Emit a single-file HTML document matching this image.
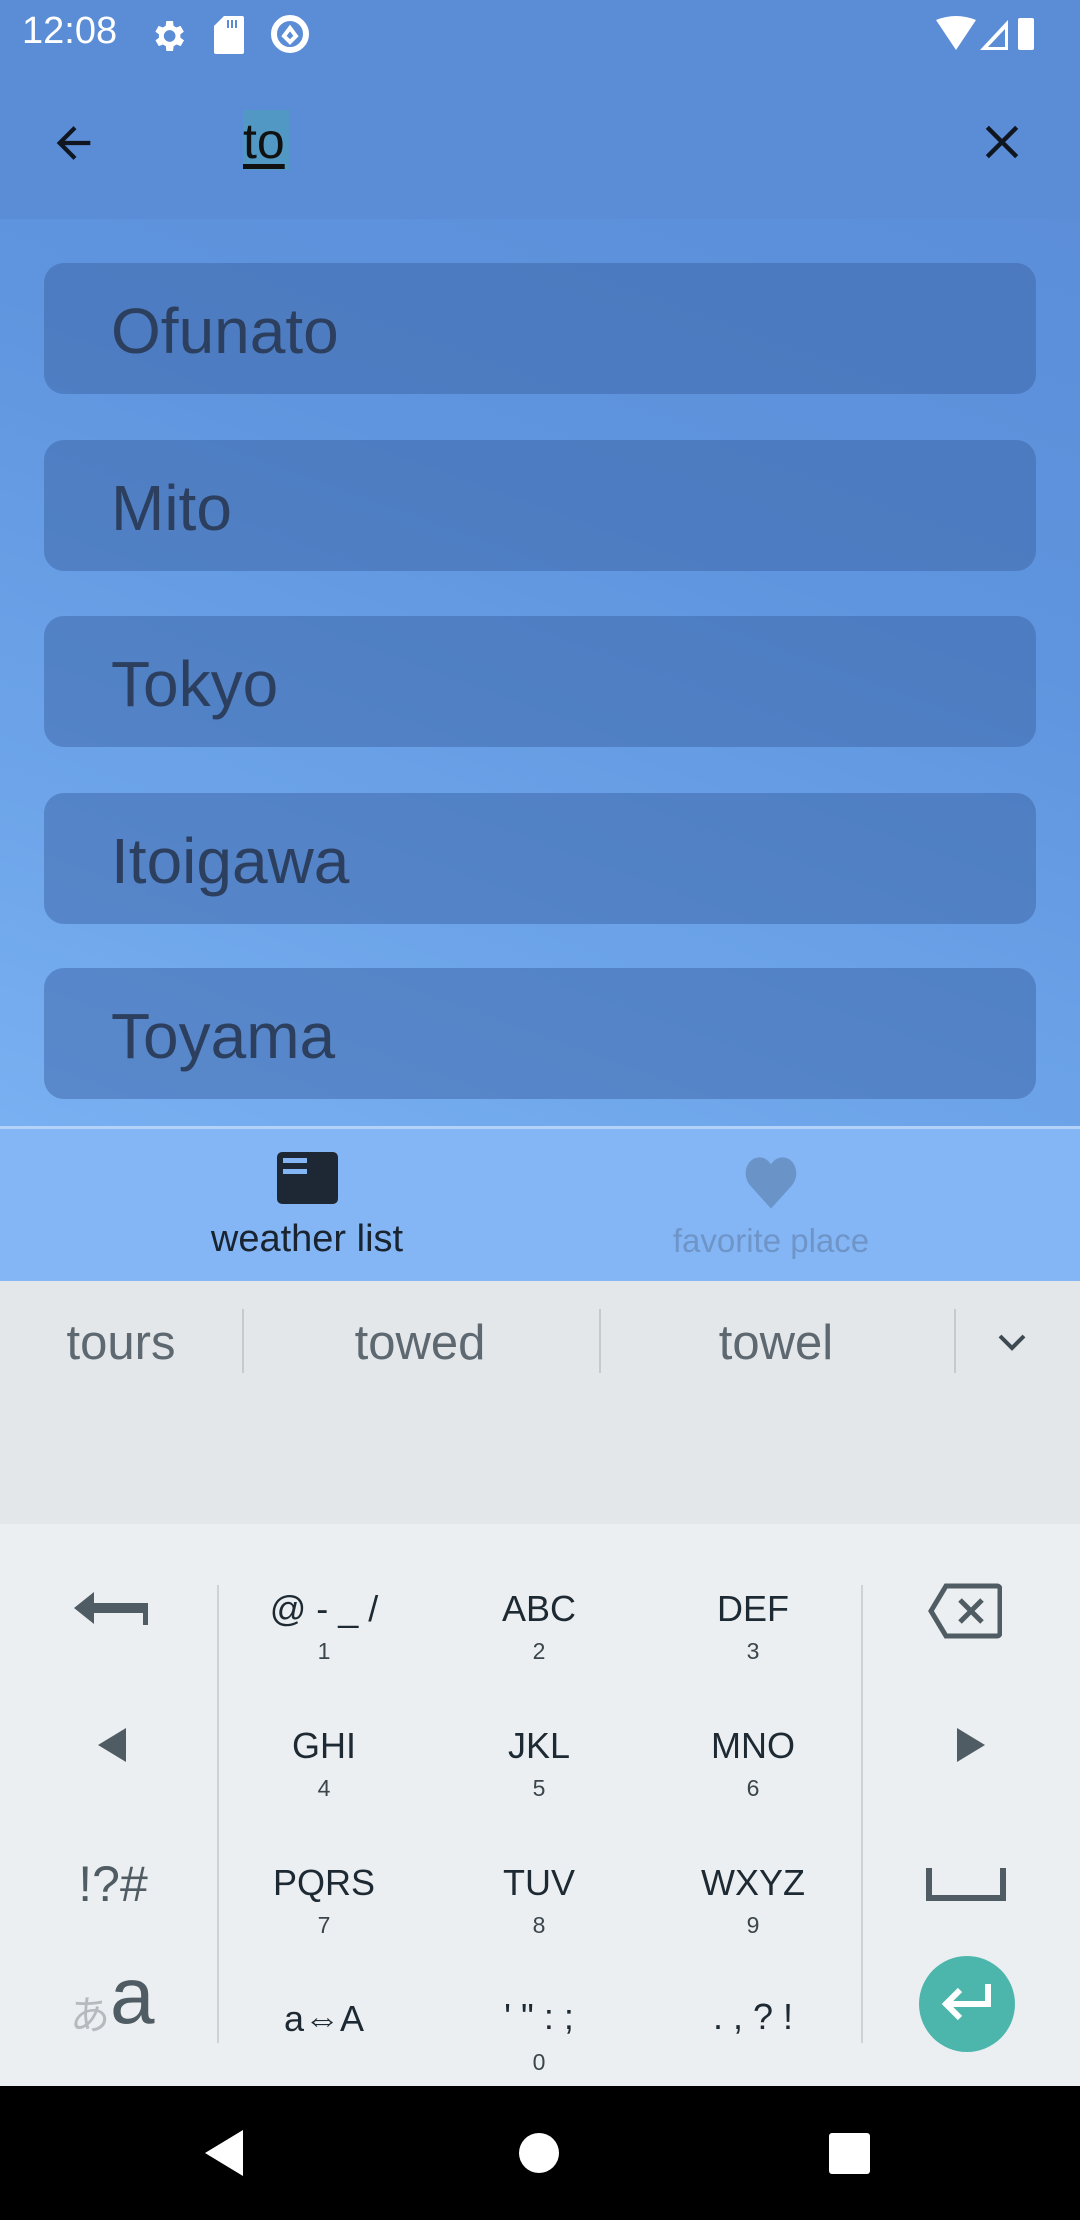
<!DOCTYPE html>
<html><head><meta charset="utf-8"><style>
*{margin:0;padding:0;box-sizing:border-box}
body{width:1080px;height:2220px;position:relative;overflow:hidden;font-family:"Liberation Sans","Noto Sans CJK JP",sans-serif;background:#eceff1}
.abs{position:absolute}
.top{left:0;top:0;width:1080px;height:1128px;background:linear-gradient(200deg,#5a8bd6 0%,#5f95de 45%,#78b0f2 100%)}
.bar{left:0;top:0;width:1080px;height:219px;background:#5b8cd6}
.card{left:44px;width:992px;height:131px;border-radius:20px;background:rgba(60,100,165,0.5);color:#2c3f5f;font-size:64px;line-height:137px;padding-left:67px}
.c{transform:translateX(-50%);text-align:center;color:#1d2a33;white-space:nowrap}
.k1{font-size:36px}
.k2{font-size:23px;color:#3a454c}
.sug{font-size:49px;color:#5d6870;top:1315px}
</style></head><body>
<div class="abs top"></div>
<div class="abs bar"></div>
<div class="abs" style="left:22px;top:10px;color:#fff;font-size:38px">12:08</div>
<svg class="abs" style="left:148px;top:16px" width="40" height="40" viewBox="0 0 24 24"><path fill="#fff" d="M19.4 13a7.5 7.5 0 000-2l2.1-1.6-2-3.5-2.5 1a7 7 0 00-1.7-1L15 3h-4l-.4 2.9a7 7 0 00-1.7 1l-2.5-1-2 3.5L6.6 11a7.5 7.5 0 000 2l-2.1 1.6 2 3.5 2.5-1a7 7 0 001.7 1L11 21h4l.4-2.9a7 7 0 001.7-1l2.5 1 2-3.5zM13 15.5a3.5 3.5 0 110-7 3.5 3.5 0 010 7z"/></svg>
<svg class="abs" style="left:214px;top:16px" width="30" height="38" viewBox="0 0 15 19"><path fill="#fff" d="M5 0h9a1 1 0 011 1v17a1 1 0 01-1 1H1a1 1 0 01-1-1V5z"/><path stroke="#5b8cd6" stroke-width="1" d="M7 2v4M9 2v4M11 2v4"/></svg>
<svg class="abs" style="left:270px;top:14px" width="40" height="40" viewBox="0 0 20 20"><circle cx="10" cy="10" r="8" fill="none" stroke="#fff" stroke-width="3"/><path d="M7 11l3-4 3 4-3 3z" fill="none" stroke="#fff" stroke-width="2"/></svg>
<svg class="abs" style="left:936px;top:16px" width="108" height="36" viewBox="0 0 108 36"><path fill="#fff" d="M0 4Q20-4 40 4L20 34z"/><path fill="#fff" d="M44 34L72 4v30z"/><path fill="#5b8cd6" d="M52 31l17-18v18z"/><rect x="82" y="2" width="16" height="32" rx="2" fill="#fff"/></svg>
<svg class="abs" style="left:52px;top:120px" width="46" height="46" viewBox="0 0 24 24"><path d="M20 12H5M12 4l-8 8 8 8" fill="none" stroke="#0f1620" stroke-width="2.2"/></svg>
<div class="abs" style="left:243px;top:110px;width:46px;height:60px;background:#5199c4"></div>
<div class="abs" style="left:243px;top:112px;font-size:50px;color:#111;text-decoration:underline;text-underline-offset:6px">to</div>
<svg class="abs" style="left:980px;top:120px" width="44" height="44" viewBox="0 0 24 24"><path d="M4 4l16 16M20 4L4 20" stroke="#0f1620" stroke-width="2.4"/></svg>
<div class="abs card" style="top:263px">Ofunato</div>
<div class="abs card" style="top:440px">Mito</div>
<div class="abs card" style="top:616px">Tokyo</div>
<div class="abs card" style="top:793px">Itoigawa</div>
<div class="abs card" style="top:968px">Toyama</div>
<div class="abs" style="left:0;top:1126px;width:1080px;height:3px;background:#b4d2f8"></div>
<div class="abs" style="left:0;top:1129px;width:1080px;height:152px;background:#84b6f6"></div>
<svg class="abs" style="left:277px;top:1152px" width="61" height="52" viewBox="0 0 61 52"><rect width="61" height="52" rx="5" fill="#1e2835"/><rect x="6" y="6" width="24" height="5" fill="#84b6f6"/><rect x="6" y="17" width="24" height="5" fill="#84b6f6"/></svg>
<svg class="abs" style="left:743px;top:1157px" width="56" height="52" viewBox="0 0 24 22"><path fill="#6a94c8" d="M12 22L3 12C-1 7 2 0 7 0c2.5 0 4 1.5 5 3 1-1.5 2.5-3 5-3 5 0 8 7 4 12z"/></svg>
<div class="abs c" style="left:307px;top:1218px;font-size:38px;color:#1a2430">weather list</div>
<div class="abs c" style="left:771px;top:1222px;font-size:33px;color:#6f95c8">favorite place</div>
<div class="abs" style="left:0;top:1281px;width:1080px;height:243px;background:#e3e7ea"></div>
<div class="abs c sug" style="left:121px">tours</div>
<div class="abs c sug" style="left:420px">towed</div>
<div class="abs c sug" style="left:776px">towel</div>
<div class="abs" style="left:242px;top:1309px;width:2px;height:64px;background:#c5cacd"></div>
<div class="abs" style="left:599px;top:1309px;width:2px;height:64px;background:#c5cacd"></div>
<div class="abs" style="left:954px;top:1309px;width:2px;height:64px;background:#c5cacd"></div>
<svg class="abs" style="left:996px;top:1330px" width="32" height="24" viewBox="0 0 32 24"><path d="M4 6l12 12 12-12" fill="none" stroke="#3e4a52" stroke-width="4"/></svg>
<div class="abs" style="left:217px;top:1585px;width:2px;height:458px;background:#cdd2d5"></div>
<div class="abs" style="left:861px;top:1585px;width:2px;height:458px;background:#cdd2d5"></div>
<svg class="abs" style="left:74px;top:1588px" width="78" height="40" viewBox="0 0 78 40"><path d="M0 20L20 4v11h54v22h-5V25H20v11z" fill="#505c63"/></svg>
<svg class="abs" style="left:98px;top:1728px" width="30" height="34" viewBox="0 0 30 34"><path d="M28 0v34L0 17z" fill="#505c63"/></svg>
<div class="abs c" style="left:113px;top:1855px;font-size:50px;color:#505c63">!?#</div>
<div class="abs" style="left:70px;top:1983px;font-size:40px;color:#b4babe">あ</div>
<div class="abs" style="left:110px;top:1950px;font-size:80px;color:#505c63">a</div>
<svg class="abs" style="left:928px;top:1583px" width="74" height="56" viewBox="0 0 74 56"><path d="M18 3h51a3 3 0 013 3v44a3 3 0 01-3 3H18L3 28z" fill="none" stroke="#505c63" stroke-width="5"/><path d="M32 17l22 22M54 17L32 39" stroke="#505c63" stroke-width="5"/></svg>
<svg class="abs" style="left:955px;top:1728px" width="30" height="34" viewBox="0 0 30 34"><path d="M2 0v34L30 17z" fill="#505c63"/></svg>
<svg class="abs" style="left:926px;top:1868px" width="80" height="34" viewBox="0 0 80 34"><path d="M3 0v30h74V0" fill="none" stroke="#505c63" stroke-width="6"/></svg>
<div class="abs" style="left:919px;top:1956px;width:96px;height:96px;border-radius:50%;background:#4db6ac"></div>
<svg class="abs" style="left:938px;top:1978px" width="60" height="52" viewBox="0 0 60 52"><path d="M50 6v20H10M22 12L8 26l14 14" fill="none" stroke="#fff" stroke-width="6"/></svg>
<div class="abs c k1" style="left:324px;top:1588px">@ - _ /</div><div class="abs c k2" style="left:324px;top:1638px">1</div>
<div class="abs c k1" style="left:539px;top:1588px">ABC</div><div class="abs c k2" style="left:539px;top:1638px">2</div>
<div class="abs c k1" style="left:753px;top:1588px">DEF</div><div class="abs c k2" style="left:753px;top:1638px">3</div>
<div class="abs c k1" style="left:324px;top:1725px">GHI</div><div class="abs c k2" style="left:324px;top:1775px">4</div>
<div class="abs c k1" style="left:539px;top:1725px">JKL</div><div class="abs c k2" style="left:539px;top:1775px">5</div>
<div class="abs c k1" style="left:753px;top:1725px">MNO</div><div class="abs c k2" style="left:753px;top:1775px">6</div>
<div class="abs c k1" style="left:324px;top:1862px">PQRS</div><div class="abs c k2" style="left:324px;top:1912px">7</div>
<div class="abs c k1" style="left:539px;top:1862px">TUV</div><div class="abs c k2" style="left:539px;top:1912px">8</div>
<div class="abs c k1" style="left:753px;top:1862px">WXYZ</div><div class="abs c k2" style="left:753px;top:1912px">9</div>
<div class="abs c k1" style="left:324px;top:1998px">a⇔A</div>
<div class="abs c k1" style="left:539px;top:1996px">' " : ;</div><div class="abs c k2" style="left:539px;top:2049px">0</div>
<div class="abs c k1" style="left:753px;top:1996px">. , ? !</div>
<div class="abs" style="left:0;top:2086px;width:1080px;height:134px;background:#000"></div>
<svg class="abs" style="left:205px;top:2130px" width="40" height="46" viewBox="0 0 40 46"><path d="M38 0v46L0 23z" fill="#fff"/></svg>
<div class="abs" style="left:519px;top:2133px;width:40px;height:40px;border-radius:50%;background:#fff"></div>
<div class="abs" style="left:829px;top:2133px;width:41px;height:41px;border-radius:3px;background:#fff"></div>
</body></html>
